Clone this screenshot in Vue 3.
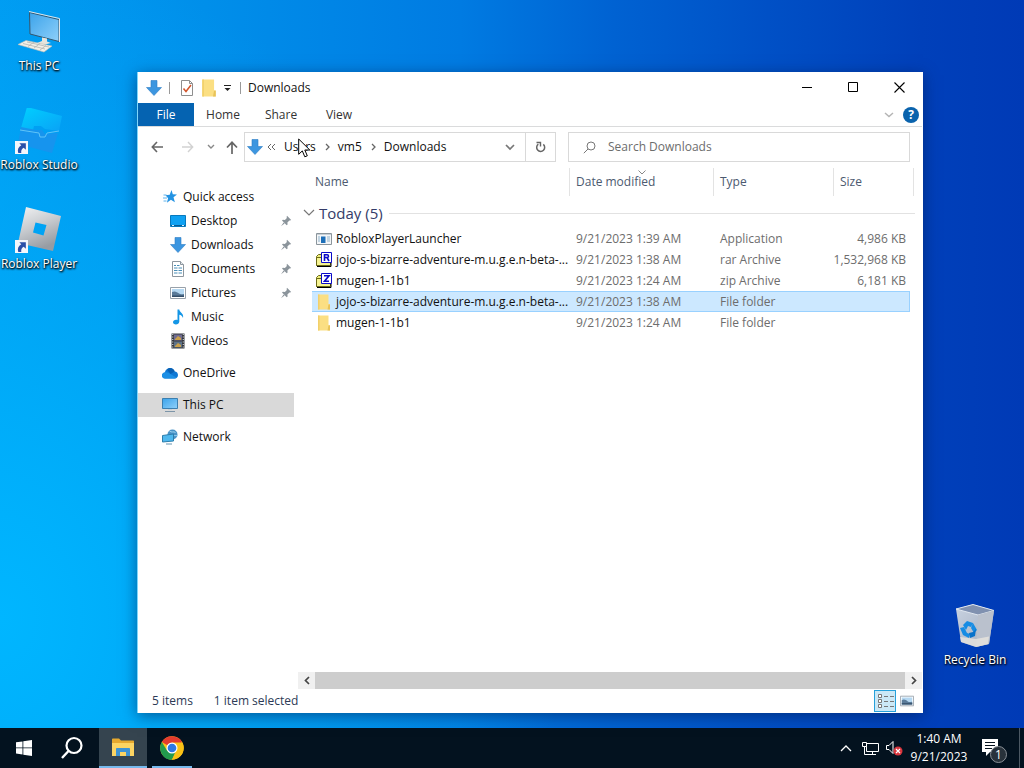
<script setup>
const desktopIcons = [
  { id: 'pc', label: 'This PC', cls: 'slot-1' },
  { id: 'studio', label: 'Roblox Studio', cls: 'slot-2' },
  { id: 'player', label: 'Roblox Player', cls: 'slot-3' },
  { id: 'bin', label: 'Recycle Bin', cls: 'slot-bin' },
]

const places = [
  { id: 'star', label: 'Quick access', level: 1 },
  { id: 'desk', label: 'Desktop', level: 2, pinned: true },
  { id: 'down', label: 'Downloads', level: 2, pinned: true },
  { id: 'docs', label: 'Documents', level: 2, pinned: true },
  { id: 'pics', label: 'Pictures', level: 2, pinned: true },
  { id: 'music', label: 'Music', level: 2 },
  { id: 'video', label: 'Videos', level: 2 },
  { id: 'cloud', label: 'OneDrive', level: 1, group: true },
  { id: 'monitor', label: 'This PC', level: 1, group: true, current: true },
  { id: 'net', label: 'Network', level: 1, group: true },
]

const files = [
  { icon: 'exe', name: 'RobloxPlayerLauncher', date: '9/21/2023 1:39 AM', type: 'Application', size: '4,986 KB' },
  { icon: 'rar', name: 'jojo-s-bizarre-adventure-m.u.g.e.n-beta-...', date: '9/21/2023 1:38 AM', type: 'rar Archive', size: '1,532,968 KB' },
  { icon: 'zip', name: 'mugen-1-1b1', date: '9/21/2023 1:24 AM', type: 'zip Archive', size: '6,181 KB' },
  { icon: 'folder', name: 'jojo-s-bizarre-adventure-m.u.g.e.n-beta-...', date: '9/21/2023 1:38 AM', type: 'File folder', size: '', selected: true },
  { icon: 'folder', name: 'mugen-1-1b1', date: '9/21/2023 1:24 AM', type: 'File folder', size: '' },
]
</script>

<template>
  <div class="screen">
    <svg class="defs" width="0" height="0" aria-hidden="true">
      <defs>
        <linearGradient id="g-screen" x1="0" y1="0" x2="1" y2="1">
          <stop offset="0" stop-color="#3ba3ea" /><stop offset="1" stop-color="#8fd0fa" />
        </linearGradient>
        <linearGradient id="g-studio" x1="0" y1="0" x2="1" y2="1">
          <stop offset="0" stop-color="#00d0ff" /><stop offset="1" stop-color="#0aa2f6" />
        </linearGradient>
        <linearGradient id="g-silver" x1="0" y1="0" x2="0.4" y2="1">
          <stop offset="0" stop-color="#f2f3f4" /><stop offset="0.5" stop-color="#c9ccd0" /><stop offset="1" stop-color="#979ca3" />
        </linearGradient>
        <linearGradient id="g-bin" x1="0" y1="0" x2="1" y2="1">
          <stop offset="0" stop-color="#c9d3e2" /><stop offset="1" stop-color="#a3adbd" />
        </linearGradient>
        <symbol id="down" viewBox="0 0 16 16">
          <path d="M5 .5h6v7h4.500L8 15.500.5 7.500H5z" fill="#3c96e0" stroke="#2c7cc4" stroke-width=".6" />
        </symbol>
        <symbol id="folder" viewBox="0 0 16 16">
          <path d="M2 .5h10.500v9.500h1.500v5.500H2z" fill="#fbdf83" />
          <path d="M2 .5h1.500v15H2z" fill="#f2d06b" />
          <path d="M12.500 10.500H14v5h-2.500z" fill="#e8c35a" />
        </symbol>
        <symbol id="star" viewBox="0 0 16 16">
          <path d="M9.500 1l1.300 4.300 4.200.2-3.500 2.800 1.400 5-4-2.500-4 3 1.200-4.600L3.500 6.300l4.200-.6z" fill="#2393e3" />
          <path d="M1.500 6h3M1 9h4M1.500 12h3" stroke="#5cb2ec" />
        </symbol>
        <symbol id="desk" viewBox="0 0 16 16">
          <path d="M.5 2.500h15v11H.5z" fill="#0fa1f2" stroke="#0779bd" />
          <path d="M1 12.500h14" stroke="#075b92" /><path d="M2 12.500h2M12 12.500h2" stroke="#d8f1ff" />
        </symbol>
        <symbol id="docs" viewBox="0 0 16 16">
          <path d="M2.500.5h8l3 3v12h-11z" fill="#fff" stroke="#8d969e" />
          <path d="M10.500.5v3h3" fill="#e5eaed" stroke="#8d969e" />
          <path d="M4 4.500h2M7 4.500h2.500M4 7h3.500M8.500 7H12M4 9.500h3.500M8.500 9.500H12M4 12h3.500M8.500 12H12" stroke="#4a8fb8" />
        </symbol>
        <symbol id="pics" viewBox="0 0 16 16">
          <path d="M.5 2.500h15v11H.5z" fill="#fff" stroke="#98a1aa" />
          <path d="M2 4h12v8H2z" fill="#b5d8f2" />
          <path d="M2 7c3-1.500 5 0 7 1.500s4 0 5 .5v3H2z" fill="#5b7b99" /><path d="M2 10.500h12V12H2z" fill="#344e68" />
        </symbol>
        <symbol id="music" viewBox="0 0 16 16">
          <path d="M7.500.5h1.800c.3 3 4.700 3.500 3.700 8.500-.6-2-2-3-3.700-3.300V12.500c0 3.700-6.300 3.700-6.300.8 0-2 2.500-3 4.500-2.200z" fill="#1496e6" />
        </symbol>
        <symbol id="video" viewBox="0 0 16 16">
          <path d="M1.500.5h13v15h-13z" fill="#35383f" />
          <path d="M4 1.500h8v6H4z" fill="#6f6b91" /><path d="M4 8.500h8v6H4z" fill="#5e7389" />
          <path d="M5 6l3-3 3 2v2H5zM5 13l3-3 3 2v2H5z" fill="#caa04a" />
          <path d="M2.750 1v14M13.250 1v14" stroke="#e7e9ee" stroke-dasharray="1 1.500" />
        </symbol>
        <symbol id="cloud" viewBox="0 0 16 16">
          <path d="M3.200 13.500C.9 13.500 0 11.900 0 10.500c0-1.700 1.200-2.800 2.800-3C3.500 4.700 5.500 3 8 3c2.300 0 4 1.300 4.700 3.500 2 .2 3.300 1.600 3.300 3.500 0 2-1.400 3.500-3.500 3.500z" fill="#0f78d4" />
          <path d="M2.800 7.500c2-.6 4 .2 5.500 1.500l6.700 3.700c-.6.500-1.400.8-2.500.8H3.200C.9 13.500 0 11.900 0 10.500c0-1.700 1.200-2.800 2.800-3z" fill="#1c8fe5" />
          <path d="M5 4.600C6 3.500 7 3 8 3c2.300 0 4 1.300 4.700 3.500L8.500 9z" fill="#0961b4" />
        </symbol>
        <symbol id="monitor" viewBox="0 0 16 16">
          <path d="M.5 1.500h15v10H.5z" fill="url(#g-screen)" stroke="#3b7fb0" />
          <path d="M3 14.500h10" stroke="#7d95a8" /><path d="M6 12.500h4" stroke="#c3d0d9" />
        </symbol>
        <symbol id="net" viewBox="0 0 16 16">
          <circle cx="10.500" cy="5.500" r="5" fill="#4a93c7" /><path d="M7.500 2c2 2 4 0 6 1.500M11.500 7c1-1 2 0 4-.5" stroke="#9bd4f1" fill="none" />
          <path d="M.5 6.500l11-1.500v7l-11 1z" fill="#4fb8ee" stroke="#2c7eac" />
          <path d="M4 15h6" stroke="#6694b0" />
        </symbol>
        <symbol id="pin" viewBox="0 0 12 12">
          <path d="M7 .8L11.200 5l-1.200.6-.6-.2-2 2 .2 2-.9.900L2 5.600l.9-.9 2 .2 2-2-.3-.8zM3.600 7.400l1 1L1 11.200z" fill="#8b949b" />
        </symbol>
        <symbol id="exe" viewBox="0 0 16 16">
          <path d="M.5 2.500h15v11H.5z" fill="#f4f6f8" stroke="#8b959c" /><path d="M1 3.500h14" stroke="#c7cfd5" />
          <path d="M5 5.500h4.500v6.500H5z" fill="#1d6fb8" /><path d="M2 6h2M2 8h2M2 10h2M11 6h3M11 8h3M11 10h3" stroke="#8fb3cc" />
        </symbol>
        <symbol id="archive" viewBox="0 0 16 16">
          <path d="M.5 4.500l2-2h4v11H.5z" fill="#f0ee7c" stroke="#6c6a16" />
          <path d="M.5 5.500h14v8H.5z" fill="#f6f392" stroke="#6c6a16" />
          <path d="M1 14.500h14V10" stroke="#000" fill="none" />
        </symbol>
        <symbol id="rar" viewBox="0 0 16 16">
          <use href="#archive" /><path d="M5.500.5h10v10h-10z" fill="#fff" stroke="#0a0ac8" />
          <path d="M8.500 9V2.800h2.800c1.500 0 1.500 2.700 0 2.700H9M11 5.500L13 9" fill="none" stroke="#0a0ac8" stroke-width="1.600" />
        </symbol>
        <symbol id="zip" viewBox="0 0 16 16">
          <use href="#archive" /><path d="M5.500.5h10v10h-10z" fill="#fff" stroke="#0a0ac8" />
          <path d="M8 2.800h5L8.500 8.200H13" fill="none" stroke="#0a0ac8" stroke-width="1.600" />
        </symbol>
        <symbol id="arrow-badge" viewBox="0 0 12 12">
          <path d="M0 0h12v12H0z" fill="#f4f6fb" />
          <path d="M4 2h6v6L8 6.200C6 7.500 5.500 9 5.800 11H3C2 8 3 5.500 5.800 4z" fill="#2b4fa8" />
        </symbol>
        <symbol id="pc" viewBox="0 0 48 48">
          <path d="M14.500 3.500L44 10.500v22L15 25z" fill="url(#g-screen)" stroke="#34566e" />
          <path d="M14 2.500L44.500 9.500V33" fill="none" stroke="#dfe6ea" />
          <path d="M27 28.500l5 1v3l4 1.500-8 2-6-2 5-2z" fill="#e7e4dc" />
          <path d="M11 31.500L37 37l-8 6L3 35.500z" fill="#f3f0e8" stroke="#c5c0b5" stroke-width=".6" />
          <path d="M8 34.500l22 5.500M12 33l22 5M13 37.500l6-4.500M19 39l6-4.500M25 41l6-4.500" stroke="#b5b5b1" stroke-width=".8" />
        </symbol>
        <symbol id="studio" viewBox="0 0 48 48">
          <path d="M12-1L47 8l-3 15-14-2-4-3h-7l-1 4-12-2z" fill="url(#g-studio)" />
          <path d="M6 19l15 3h6l3 4 13-1-6 20L3 36z" fill="#1694ee" />
          <path d="M5 22l19 3 1 4h5l2-4 12-2" fill="none" stroke="#60c4f8" />
          <use href="#arrow-badge" x="0" y="33" width="13" height="13" />
        </symbol>
        <symbol id="player" viewBox="0 0 48 48">
          <path fill-rule="evenodd" d="M11 0l35 9-8 35L3 36zM20.500 15.500l-2.500 10 10.500 3 3-10.500z" fill="url(#g-silver)" />
          <use href="#arrow-badge" x="0" y="33" width="13" height="13" />
        </symbol>
        <symbol id="bin" viewBox="0 2 48 48">
          <path d="M5 8L22 3.500 43 9.500 38 43 25 46 10 41z" fill="url(#g-bin)" />
          <path d="M5 8L22 3.500 43 9.500 27 14z" fill="#8091b0" stroke="#e0e7f0" />
          <path d="M27 14L43 9.500 38 43 25 46z" fill="#bac1cd" />
          <path d="M9 36l16 2 13-2.500-1 7.500-12 3-15-5z" fill="#e8e5df" opacity=".8" />
          <path d="M12 24l4-4 6 2-2 4-3-1-2 4zM22 22l4 7-3 3-3-5zM9 27l4-1 3 6 3 1-1 4-6-3z" fill="#168ce4" />
          <path d="M18 32l4-1 3-3-1 7-5 2z" fill="#0872ca" />
        </symbol>
      </defs>
    </svg>

    <main class="desktop">
      <a v-for="d in desktopIcons" :key="d.id" href="#" class="shortcut" :class="d.cls">
        <svg class="shortcut-icon"><use :href="'#' + d.id" /></svg>
        <span>{{ d.label }}</span>
      </a>

      <section class="window" aria-label="Downloads">
        <header class="titlebar">
          <svg class="i16"><use href="#down" /></svg>
          <span class="bar bar-a"></span>
          <button class="quick" aria-label="Properties">
            <svg class="i16" viewBox="0 0 16 16"><path d="M2.500.5h8l3 3v12h-11z" fill="#fff" stroke="#8e8e8e" /><path d="M10.500.5v3h3" fill="none" stroke="#8e8e8e" /><path d="M4.500 8.500l2.500 3 5-6.500" fill="none" stroke="#d2552c" stroke-width="1.500" /></svg>
          </button>
          <button class="quick" aria-label="New folder"><svg class="i18"><use href="#folder" /></svg></button>
          <button class="quick" aria-label="Customize"><svg width="8" height="8" viewBox="0 0 8 8"><path d="M0 1.500h7" stroke="#222" /><path d="M.5 4h6l-3 3z" fill="#222" /></svg></button>
          <span class="bar bar-b"></span>
          <h1>Downloads</h1>
          <div class="controls">
            <button aria-label="Minimize"><svg width="11" height="11"><path d="M0 5.500h10" stroke="#000" /></svg></button>
            <button aria-label="Maximize"><svg width="11" height="11"><path d="M.5.5h9v9h-9z" fill="none" stroke="#000" /></svg></button>
            <button aria-label="Close"><svg width="11" height="11"><path d="M.5.5l10 10M10.500.5l-10 10" stroke="#000" stroke-width="1.100" /></svg></button>
          </div>
        </header>

        <nav class="ribbon" aria-label="Ribbon">
          <button class="tab file">File</button>
          <button class="tab">Home</button>
          <button class="tab">Share</button>
          <button class="tab">View</button>
          <button class="expand" aria-label="Expand the ribbon"><svg width="10" height="6"><path d="M1 1l4 3.500L9 1" fill="none" stroke="#b5b5b5" stroke-width="1.500" /></svg></button>
          <button class="help" aria-label="Help">?</button>
        </nav>

        <div class="toolbar">
          <button class="nav-btn" aria-label="Back"><svg width="13" height="12"><path d="M12 6H1.500M6 1L1.300 6 6 11" fill="none" stroke="#666" stroke-width="1.600" /></svg></button>
          <button class="nav-btn" aria-label="Forward"><svg width="13" height="12"><path d="M1 6h10.500M7 1l4.700 5L7 11" fill="none" stroke="#d2d2d2" stroke-width="1.400" /></svg></button>
          <button class="nav-small" aria-label="Recent locations"><svg width="8" height="6"><path d="M1 1l3 3 3-3" fill="none" stroke="#888" stroke-width="1.400" /></svg></button>
          <button class="nav-small" aria-label="Up"><svg width="12" height="13"><path d="M6 13V1.500M1 6.500L6 1.300l5 5.200" fill="none" stroke="#666" stroke-width="1.700" /></svg></button>
          <div class="fields">
            <div class="address">
              <svg class="i16"><use href="#down" /></svg>
              <svg class="laquo" width="9" height="8"><path d="M4 1L1 4l3 3M8 1L5 4l3 3" fill="none" stroke="#666" /></svg>
              <a href="#" class="crumb">Users</a>
              <svg class="sep" width="5" height="8"><path d="M1 1l3 3-3 3" fill="none" stroke="#666" stroke-width="1.300" /></svg>
              <a href="#" class="crumb">vm5</a>
              <svg class="sep" width="5" height="8"><path d="M1 1l3 3-3 3" fill="none" stroke="#666" stroke-width="1.300" /></svg>
              <a href="#" class="crumb">Downloads</a>
              <button class="history" aria-label="Previous locations"><svg width="10" height="7"><path d="M1 1l4 4 4-4" fill="none" stroke="#777" stroke-width="1.700" /></svg></button>
              <button class="refresh" aria-label="Refresh"><svg width="12" height="12"><path d="M3.300 3.200a4 4 0 1 0 5 .2" fill="none" stroke="#666" stroke-width="1.500" /><path d="M1.500 1.500h4v4" fill="none" stroke="#666" stroke-width="1.400" /></svg></button>
            </div>
            <label class="search">
              <svg width="13" height="13"><circle cx="8" cy="5" r="4" fill="none" stroke="#777" /><path d="M5 8L.8 12.200" stroke="#777" /></svg>
              <input type="search" placeholder="Search Downloads" aria-label="Search Downloads" />
            </label>
          </div>
        </div>

        <div class="body">
          <nav class="places" aria-label="Places">
            <a v-for="p in places" :key="p.id" href="#" class="place" :class="['level-' + p.level, { group: p.group, current: p.current }]">
              <svg class="i16"><use :href="'#' + p.id" /></svg>
              <span>{{ p.label }}</span>
              <svg v-if="p.pinned" class="pin"><use href="#pin" /></svg>
            </a>
          </nav>

          <div class="pane">
            <table>
              <colgroup><col /><col class="c-date" /><col class="c-type" /><col class="c-size" /></colgroup>
              <thead>
                <tr>
                  <th scope="col">Name</th>
                  <th scope="col">
                    Date modified
                    <svg class="sort" width="8" height="5"><path d="M.5.5L4 4 7.500.5" fill="none" stroke="#888" /></svg>
                  </th>
                  <th scope="col">Type</th>
                  <th scope="col">Size</th>
                </tr>
              </thead>
              <tbody>
                <tr class="group-row">
                  <th colspan="4" scope="rowgroup">
                    <div class="group-head">
                      <svg width="12" height="8"><path d="M1 1l5 5 5-5" fill="none" stroke="#777" stroke-width="1.200" /></svg>
                      <span>Today (5)</span><i></i>
                    </div>
                  </th>
                </tr>
                <tr v-for="(f, i) in files" :key="i" class="file-row" :class="{ selected: f.selected }">
                  <td><div class="name"><svg class="i16"><use :href="'#' + f.icon" /></svg>{{ f.name }}</div></td>
                  <td>{{ f.date }}</td>
                  <td>{{ f.type }}</td>
                  <td>{{ f.size }}</td>
                </tr>
              </tbody>
            </table>
            <div class="scrollbar">
              <button aria-label="Scroll left"><svg width="6" height="9"><path d="M5 1L1.500 4.500 5 8" fill="none" stroke="#444" stroke-width="1.700" /></svg></button>
              <div class="thumb"></div>
              <button aria-label="Scroll right"><svg width="6" height="9"><path d="M1 1l3.500 3.500L1 8" fill="none" stroke="#444" stroke-width="1.700" /></svg></button>
            </div>
          </div>
        </div>

        <footer class="status">
          <span>5 items</span>
          <span>1 item selected</span>
          <button class="view-btn active" aria-label="Details view">
            <svg width="17" height="15"><path d="M1.500.5h3v3h-3zM1.500 5.500h3v3h-3zM1.500 10.500h3v3h-3z" fill="#fff" stroke="#777" /><path d="M7 2.500h4M13 2.500h4M7 7.500h4M13 7.500h4M7 12.500h4M13 12.500h4" stroke="#777" /></svg>
          </button>
          <button class="view-btn" aria-label="Large icons view"><svg width="14" height="14"><use href="#pics" /></svg></button>
        </footer>
      </section>

      <svg class="cursor" width="13" height="20" viewBox="0 0 13 20"><path d="M.7 1v15.300l3.600-3.400 2.500 5.900 2.500-1-2.500-5.800h5z" fill="#fff" stroke="#000" /></svg>
    </main>

    <footer class="taskbar">
      <button class="task" aria-label="Start"><svg width="16" height="16"><path d="M0 2.300l6.500-.9v6.100H0zM7.300 1.300L16 0v7.500H7.300zM0 8.300h6.500v6.200L0 13.600zM7.300 8.300H16V16l-8.700-1.300z" fill="#fff" /></svg></button>
      <button class="task" aria-label="Search"><svg width="24" height="24"><circle cx="14" cy="9.500" r="7.500" fill="none" stroke="#fff" stroke-width="2.200" /><path d="M8.500 15L2 22" stroke="#fff" stroke-width="2.400" /></svg></button>
      <button class="task explorer" aria-label="File Explorer">
        <svg width="22" height="19"><path d="M0 1.500C0 .7.500.5 1 .5h6l2 2h12c.6 0 1 .3 1 1V18H0z" fill="#e6a92f" /><path d="M0 5h22v13H0z" fill="#fcd462" /><path d="M4 18v-7c0-.6.400-1 1-1h12c.6 0 1 .4 1 1v7h-4v-4H8v4z" fill="#3e93d3" /></svg>
      </button>
      <button class="task chrome" aria-label="Chrome">
        <svg width="24" height="24" viewBox="0 0 48 48"><circle cx="24" cy="24" r="23.500" fill="#fbc116" /><path d="M24 24L3.600 12.200A23.500 23.500 0 0 1 44.400 12.300z" fill="#e33b2e" /><path d="M24 24h10l-10 23.500A23.500 23.500 0 0 1 3.600 12.200L14.500 30z" fill="#229b4d" /><path d="M24 13h20.700a23.500 23.500 0 0 1-21 34.500L34 29z" fill="#fbc116" /><circle cx="24" cy="24" r="11" fill="#fff" /><circle cx="24" cy="24" r="8.700" fill="#2f78e4" /></svg>
      </button>
      <div class="tray">
        <button aria-label="Show hidden icons"><svg width="12" height="8"><path d="M1 7l5-5 5 5" fill="none" stroke="#fff" stroke-width="1.300" /></svg></button>
        <button aria-label="Network status"><svg width="17" height="15"><path d="M4.500 2.500h12v8h-12zM10.500 10.500V13M6 13.500h8M2.500 6v7.500H6" fill="none" stroke="#fff" /><path d="M.5 1.500h4v4h-4z" fill="#061320" stroke="#fff" /></svg></button>
        <button aria-label="Volume muted"><svg width="17" height="16"><path d="M.5 5.500H3l4-4v12l-4-4H.5z" fill="none" stroke="#fff" /><circle cx="12" cy="11" r="4.500" fill="#d9363e" /><path d="M10 9l4 4M14 9l-4 4" stroke="#fff" stroke-width="1.200" /></svg></button>
        <button class="clock"><time>1:40 AM</time><time>9/21/2023</time></button>
        <button class="notes" aria-label="Notifications"><svg width="17" height="18"><path d="M0 0h16v13H8l-4 4v-4H0z" fill="#fff" /><path d="M3 3.500h10M3 6.500h10M3 9.500h7" stroke="#061320" /></svg><b>1</b></button>
        <span class="peek"></span>
      </div>
    </footer>
  </div>
</template>

<style>
html, body { margin: 0; }
body { overflow: hidden; }
</style>

<style scoped>
* { box-sizing: border-box; }
button { border: 0; padding: 0; margin: 0; background: none; font: inherit; color: inherit; display: flex; align-items: center; justify-content: center; }
a { color: inherit; text-decoration: none; }
svg { display: block; flex: none; }
.defs { position: absolute; }
.i16 { width: 16px; height: 16px; }
.i18 { width: 18px; height: 18px; }
.screen { height: 100vh; display: flex; flex-direction: column; font: 12px/16px "Open Sans", "Noto Sans", sans-serif; color: #111; }
.desktop {
  flex: 1; min-height: 0; position: relative;
  background:
    radial-gradient(ellipse 55% 90% at 0% 85%, #00b6ff 0%, #00b0fa99 45%, #00a0f000 100%),
    linear-gradient(to right, #009cf2 0%, #008fea 20%, #007be2 45%, #0062d2 60%, #0050c6 75%, #0040ba 90%, #003ab6 100%);
}
.shortcut { position: absolute; width: 80px; display: flex; flex-direction: column; align-items: center; gap: 1px; color: #fff; white-space: nowrap; text-shadow: 1px 1px 2px #000, 0 1px 2px #000; }
.shortcut-icon { width: 48px; height: 48px; overflow: visible; }
.slot-1 { left: -1px; top: 9px; }
.slot-2 { left: -1px; top: 108px; }
.slot-3 { left: -1px; top: 207px; }
.slot-bin { right: 9px; bottom: 60px; }

.window { position: absolute; left: 137px; right: 101px; top: 72px; bottom: 15px; background: #fff; display: flex; flex-direction: column; border-left: 1px solid #7fd6fb; border-right: 1px solid #fff; box-shadow: 0 3px 14px #00184a88; }
.titlebar { height: 31px; flex: none; display: flex; align-items: center; padding-left: 8px; }
h1 { font: inherit; margin: 0 0 0 7px; }
.bar { width: 1px; height: 12px; background: #999; }
.bar-a { margin: 0 9px 0 7px; }
.bar-b { margin-left: 8px; }
.quick { margin-right: 5px; }
.quick + .quick { margin-right: 6px; }
.quick + .quick + .quick { margin-right: 0; }
.controls { margin-left: auto; display: flex; align-self: stretch; }
.controls button { width: 46px; }
.ribbon { height: 24px; flex: none; display: flex; border-bottom: 1px solid #dadbdc; align-items: stretch; }
.tab { width: 58px; color: #333; }
.file { width: 56px; background: #0563b1; color: #fff; }
.expand { margin-left: auto; width: 24px; }
.help { align-self: center; width: 16px; height: 16px; margin: 0 3px 0 2px; border-radius: 50%; background: #0a63ad; color: #fff; font-weight: 700; }

.toolbar { height: 40px; flex: none; display: flex; align-items: center; padding: 0 12px 0 4px; }
.nav-btn { width: 30px; height: 30px; }
.nav-small { width: 18px; height: 30px; }
.nav-small + .nav-small { width: 24px; }
.fields { flex: 1; min-width: 0; display: grid; grid-template-columns: minmax(0, 312fr) minmax(0, 342fr); column-gap: 12px; }
.address { height: 30px; border: 1px solid #d9d9d9; display: flex; align-items: center; padding-left: 2px; }
.laquo { margin: 0 8px 0 4px; }
.sep { margin: 0 8px 0 9px; }
.history { margin-left: auto; width: 30px; height: 28px; }
.refresh { width: 30px; height: 28px; border-left: 1px solid #d9d9d9; }
.search { height: 30px; border: 1px solid #d9d9d9; display: flex; align-items: center; padding-left: 14px; gap: 12px; }
.search input { flex: 1; min-width: 0; border: 0; outline: 0; padding: 0; font: inherit; background: none; appearance: none; }
.search input::placeholder { color: #6d6d6d; opacity: 1; }

.body { flex: 1; min-height: 0; display: flex; }
.places { width: 160px; flex: none; padding-top: 18px; }
.place { height: 24px; width: 156px; display: flex; align-items: center; padding-left: 24px; gap: 5px; }
.level-2 { padding-left: 32px; }
.group { margin-top: 8px; }
.current { background: #d9d9d9; }
.pin { width: 12px; height: 12px; margin-left: auto; margin-right: 2px; }

.pane { flex: 1; min-width: 0; display: flex; flex-direction: column; padding-top: 1px; }
table { margin: 0 12px 0 14px; border-collapse: separate; border-spacing: 0; table-layout: fixed; width: calc(100% - 26px); white-space: nowrap; }
.c-date { width: 144px; }
.c-type { width: 120px; }
.c-size { width: 77px; }
th { font-weight: 400; text-align: left; padding: 0; }
thead th { height: 28px; padding-left: 6px; color: #4c5a70; border-left: 1px solid #e3e3e3; position: relative; }
thead th:first-child { border-left: 0; padding-left: 3px; }
thead th:last-child::after { content: ""; position: absolute; right: -4px; top: 0; bottom: 0; width: 1px; background: #e3e3e3; }
.sort { position: absolute; left: 68px; top: 2px; }
.group-row th { height: 32px; padding-top: 2px; }
.group-head { display: flex; align-items: center; margin: 0 -5px 0 -9px; font-size: 15px; line-height: 20px; color: #343b68; gap: 4px; }
.group-head i { flex: 1; height: 1px; background: #e2e2e2; margin-left: 2px; }
.file-row td { height: 21px; padding: 0 0 0 7px; color: #6d6d6d; }
.file-row td:first-child { padding-left: 4px; color: #111; }
.file-row td:last-child { text-align: right; padding: 0 4px 0 0; }
.name { display: flex; align-items: center; gap: 4px; overflow: hidden; }
.file-row.selected td { background: #cce8ff; border: solid #99d1ff; border-width: 1px 0; }
.file-row.selected td:last-child { border-right-width: 1px; }
.scrollbar { height: 17px; margin-top: auto; display: flex; align-items: center; background: #f0f0f0; }
.scrollbar button { width: 17px; height: 17px; }
.thumb { flex: 1; height: 17px; background: #cdcdcd; }
.status { height: 24px; flex: none; display: flex; align-items: center; padding: 0 4px 0 14px; color: #2c3a56; }
.status span + span { margin-left: 21px; }
.view-btn { width: 22px; height: 22px; }
.status span + .view-btn { margin-left: auto; }
.active { background: #cbe8f6; border: 1px solid #26a0da; }
.cursor { position: absolute; left: 298px; top: 138px; }

.taskbar { height: 40px; flex: none; background: #03121f; display: flex; color: #fff; }
.task { width: 48px; }
.explorer { margin: 0 1px 0 3px; background: #35444f; border-bottom: 2px solid #76b9ed; }
.chrome { position: relative; }
.chrome::after { content: ""; position: absolute; left: 4px; right: 4px; bottom: 0; height: 2px; background: #76b9ed; }
.tray { margin-left: auto; display: flex; align-items: center; }
.tray > button { width: 24px; height: 40px; }
.tray > .clock { width: 66px; flex-direction: column; line-height: 18px; }
.tray > .notes { width: 47px; padding-right: 10px; position: relative; }
.notes b { position: absolute; left: 18px; top: 18px; width: 17px; height: 17px; border-radius: 50%; border: 1px solid #8a9097; background: #28323b; font-size: 12px; line-height: 15px; font-weight: 400; }
.peek { width: 5px; height: 40px; border-left: 1px solid #4c5863; }
</style>
